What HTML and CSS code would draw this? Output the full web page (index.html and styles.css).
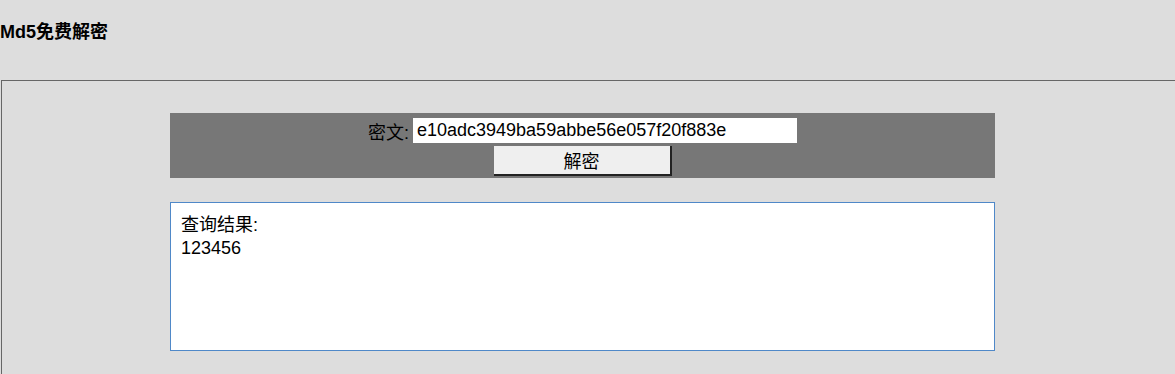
FILE: index.html
```html
<!DOCTYPE html>
<html lang="zh-CN">
<head>
    <meta charset="UTF-8">
    <title>Md5免费解密</title>
    <link rel="stylesheet" href="styles.css">
</head>
<body>
    <h4 class="title">Md5免费解密</h4>
    <div class="wrap">
        <div class="panel">
            <div class="row">
                <label for="cipher">密文:</label>
                <input id="cipher" class="cipher-input" type="text" value="e10adc3949ba59abbe56e057f20f883e">
            </div>
            <button class="decrypt-btn">解密</button>
        </div>
        <div class="result">
            查询结果:<br>
            123456
        </div>
    </div>
</body>
</html>
```

FILE: styles.css
```css
html, body {
    margin: 0;
    background-color: #dddddd;
    font-family: "Liberation Sans", Arial, "Noto Sans CJK SC", sans-serif;
    overflow: hidden;
}
.title {
    margin: 0;
    padding: 21px 0 0 0;
    height: 59px;
    font-size: 18px;
    line-height: 22px;
    color: #000;
}
.wrap {
    margin-left: 1px;
    border: 1px solid #666666;
    border-right: none;
    padding: 32px 0 40px 168px;
}
.panel {
    width: 825px;
    height: 65px;
    background-color: #777777;
    padding-top: 5px;
    box-sizing: border-box;
    text-align: center;
    font-size: 18px;
}
.row {
    display: flex;
    justify-content: center;
    align-items: center;
    height: 25px;
    color: #000;
}
.row label {
    margin-right: 4px;
}
.cipher-input {
    width: 384px;
    height: 25px;
    box-sizing: border-box;
    border: none;
    padding: 0 0 0 4px;
    font-family: "Liberation Sans", Arial, sans-serif;
    font-size: 18px;
    color: #000;
    background: #fff;
    outline: none;
}
.decrypt-btn {
    display: block;
    margin: 3px auto 0;
    width: 178px;
    height: 30px;
    box-sizing: border-box;
    background-color: #efefef;
    border: none;
    border-right: 2px solid #222;
    border-bottom: 2px solid #222;
    font-family: "Liberation Sans", Arial, "Noto Sans CJK SC", sans-serif;
    font-size: 18px;
    color: #000;
    padding: 0;
}
.result {
    margin-top: 24px;
    width: 825px;
    height: 149px;
    box-sizing: border-box;
    background-color: #fff;
    border: 1px solid #4f88c8;
    padding: 11px 10px;
    font-size: 18px;
    line-height: 23px;
    color: #000;
}
```
